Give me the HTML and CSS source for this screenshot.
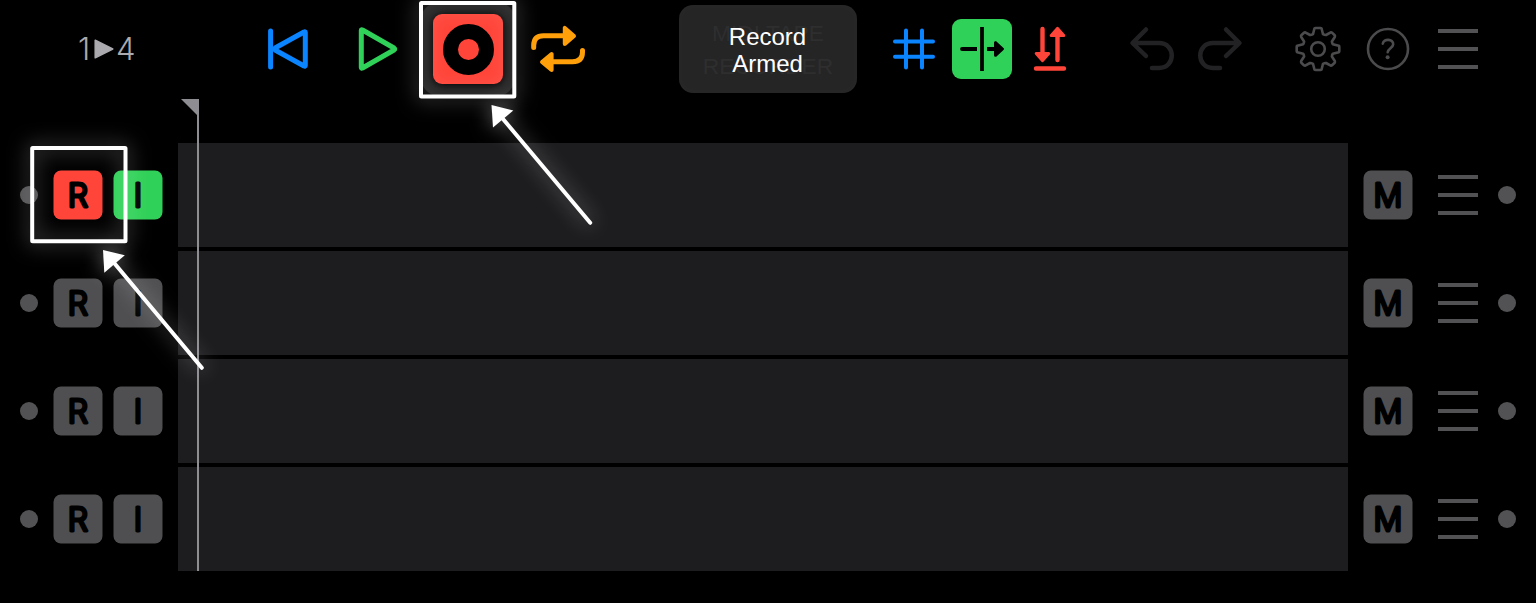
FILE: index.html
```html
<!DOCTYPE html>
<html lang="en">
<head>
<meta charset="utf-8">
<title>MIDI Tape Recorder</title>
<link rel="stylesheet" href="styles.css">
</head>
<body>
<div class="app">
  <header class="toolbar">
    <div class="counter"><span>1</span><svg class="counter-arrow" viewBox="0 0 20 20"><path d="M1.2 1.2 18.8 10 1.2 18.8Z"/></svg><span>4</span></div>
    <svg class="tool rewind" viewBox="266 0 44 98"><path d="M270.600 31V67M305.300 32.500V65.500Q305.300 66.500 304 66L275.500 50.200Q273.800 49 275.500 47.800L304 32Q305.300 31.500 305.300 32.500Z"/></svg>
    <svg class="tool play" viewBox="356 0 44 98"><path d="M361.300 30.500V67.500Q361.300 68.500 362.500 68L394 50Q395.500 49 394 48L362.500 30Q361.300 29.500 361.300 30.500Z"/></svg>
    <div class="record"><div class="record-ring"></div></div>
    <svg class="tool loop" viewBox="530 0 56 98">
      <path d="M533.700 47.500V45.500Q533.700 35.700 543.500 35.700H565M582.500 50.500V52Q582.500 61.800 572.500 61.800H552"/>
      <path class="head" d="M564.800 27.900V44L574 36ZM551.600 54V70L542 62Z"/>
    </svg>
    <div class="display">
      <div class="title"><span>MIDI TAPE</span><span>RECORDER</span></div>
      <div class="message"><span>Record</span><span>Armed</span></div>
    </div>
    <svg class="tool grid" viewBox="892 0 44 98"><path d="M906 30.500V67.500M922 30.500V67.500M895 41.500H933M895 56.800H933"/></svg>
    <div class="insert"><svg class="tool" viewBox="952 0 60 98"><path class="cap" d="M962 49H970"/><path d="M962 49H977M982 27V71M987 49H996"/><path class="head" d="M995.500 42.700V55.300L1002.500 49Z"/></svg></div>
    <svg class="tool quantize" viewBox="1032 0 36 98">
      <path d="M1042.500 29V54M1057.500 60V35M1036 68.500H1064"/>
      <path class="head" d="M1036.300 53.500H1048.700L1042.500 60.500ZM1051.300 35.500H1063.700L1057.500 28.500Z"/>
    </svg>
    <svg class="tool history undo" viewBox="1129 0 46 98"><path d="M1146 29.500 1132.500 43 1146 56M1133 43H1159C1176 43 1176 68 1159 68H1152"/></svg>
    <svg class="tool history redo" viewBox="1197 0 46 98"><path d="M1226 29.500 1239.500 43 1226 56M1239 43H1213C1196 43 1196 68 1213 68H1220"/></svg>
    <svg class="tool settings" viewBox="1294 0 48 98">
      <path d="M1314.500 28.300Q1314.800 28 1315.500 28H1320.500Q1321.200 28 1321.500 28.300L1323 34.200Q1324.800 35.200 1326 35L1330.800 32.300Q1331.500 32.200 1332 32.700L1334.700 35.300Q1335.200 36 1334.800 37L1331.900 41.500Q1332 43 1332.800 44.200L1338.700 45.700Q1339.300 46 1339.300 46.700V51.300Q1339.300 52 1338.700 52.300L1332.800 53.800Q1332 55 1331.900 56.500L1334.800 61Q1335.200 62 1334.700 62.700L1332 65.300Q1331.500 65.800 1330.800 65.700L1326 63Q1324.800 62.800 1323 63.800L1321.500 69.700Q1321.200 70 1320.500 70H1315.500Q1314.800 70 1314.500 69.700L1313 63.800Q1311.200 62.800 1310 63L1305.200 65.700Q1304.500 65.800 1304 65.300L1301.300 62.700Q1300.800 62 1301.200 61L1304.100 56.500Q1304 55 1303.200 53.800L1297.300 52.300Q1296.700 52 1296.700 51.300V46.700Q1296.700 46 1297.300 45.700L1303.200 44.200Q1304 43 1304.100 41.500L1301.200 37Q1300.800 36 1301.300 35.300L1304 32.700Q1304.500 32.200 1305.200 32.300L1310 35Q1311.200 35.200 1313 34.200Z"/>
      <circle cx="1318" cy="49" r="6.800"/>
    </svg>
    <svg class="tool help" viewBox="1366 0 44 98"><circle cx="1388" cy="49" r="20"/><path d="M1382.800 43.700C1383.500 38.200 1393.500 38.700 1393.200 44.400C1393 48 1387.800 48.500 1387.700 52.300"/><circle class="point" cx="1387.600" cy="57.300" r="2"/></svg>
    <div class="menu"><i></i><i></i><i></i></div>
  </header>

  <main class="tracks">
    <section class="track armed">
      <div class="inputs"><i class="dot"></i><svg class="key rec"><rect x=".5" y=".5" width="49" height="49" rx="7.500"/><text x="25" y="36.700">R</text></svg><svg class="key in"><rect x=".5" y=".5" width="49" height="49" rx="7.500"/><text x="25" y="36.700">I</text></svg></div>
      <div class="lane"></div>
      <div class="outputs"><svg class="key"><rect x=".5" y=".5" width="49" height="49" rx="7.500"/><text x="25" y="36.700">M</text></svg><div class="menu"><i></i><i></i><i></i></div><i class="dot"></i></div>
    </section>
    <section class="track">
      <div class="inputs"><i class="dot"></i><svg class="key rec"><rect x=".5" y=".5" width="49" height="49" rx="7.500"/><text x="25" y="36.700">R</text></svg><svg class="key in"><rect x=".5" y=".5" width="49" height="49" rx="7.500"/><text x="25" y="36.700">I</text></svg></div>
      <div class="lane"></div>
      <div class="outputs"><svg class="key"><rect x=".5" y=".5" width="49" height="49" rx="7.500"/><text x="25" y="36.700">M</text></svg><div class="menu"><i></i><i></i><i></i></div><i class="dot"></i></div>
    </section>
    <section class="track">
      <div class="inputs"><i class="dot"></i><svg class="key rec"><rect x=".5" y=".5" width="49" height="49" rx="7.500"/><text x="25" y="36.700">R</text></svg><svg class="key in"><rect x=".5" y=".5" width="49" height="49" rx="7.500"/><text x="25" y="36.700">I</text></svg></div>
      <div class="lane"></div>
      <div class="outputs"><svg class="key"><rect x=".5" y=".5" width="49" height="49" rx="7.500"/><text x="25" y="36.700">M</text></svg><div class="menu"><i></i><i></i><i></i></div><i class="dot"></i></div>
    </section>
    <section class="track">
      <div class="inputs"><i class="dot"></i><svg class="key rec"><rect x=".5" y=".5" width="49" height="49" rx="7.500"/><text x="25" y="36.700">R</text></svg><svg class="key in"><rect x=".5" y=".5" width="49" height="49" rx="7.500"/><text x="25" y="36.700">I</text></svg></div>
      <div class="lane"></div>
      <div class="outputs"><svg class="key"><rect x=".5" y=".5" width="49" height="49" rx="7.500"/><text x="25" y="36.700">M</text></svg><div class="menu"><i></i><i></i><i></i></div><i class="dot"></i></div>
    </section>
  </main>

  <svg class="playhead" viewBox="0 0 18 472"><path d="M0 0H18V472H16V16Z"/></svg>

  <svg class="callouts" viewBox="0 0 1536 603">
    <g class="callout"><rect x="421" y="3" width="93.300" height="93.500" rx=".5"/></g>
    <g class="callout"><rect x="32.200" y="148" width="93.300" height="93.300" rx=".5"/></g>
    <g class="callout"><path d="M500.500 116 590.200 222.800"/><path class="tip" d="M491.500 105 513.300 110.500 493 127.500Z"/></g>
    <g class="callout"><path d="M112.500 261 201.800 367.800"/><path class="tip" d="M103 250 124.800 255.300 104.300 272.700Z"/></g>
  </svg>
</div>
</body>
</html>
```
FILE: styles.css
```css
* { box-sizing: border-box; }
body { margin: 0; background: #000; overflow: hidden; }
.app {
  position: relative;
  width: 1536px;
  height: 603px;
  background: #000;
  font-family: Inter, "Liberation Sans", sans-serif;
}

.toolbar { display: flex; align-items: center; height: 98px; padding-left: 79px; }
.toolbar > * { flex: none; }
.counter {
  display: flex;
  align-items: center;
  width: 60px;
  color: #aaaaaf;
  font: 300 31px/44px Inter, sans-serif;
}
.counter span:first-child { width: 16px; margin-left: -1px; }
.counter span:last-child { margin-left: 2px; }
.counter-arrow { width: 20px; height: 20px; flex: none; fill: #aaaaaf; stroke: #aaaaaf; stroke-width: 1.500px; stroke-linejoin: round; }

.tool { height: 98px; fill: none; stroke-linecap: round; stroke-linejoin: round; display: block; }
.rewind { width: 44px; margin-left: 127px; stroke: #0a84ff; stroke-width: 5px; }
.play { width: 44px; margin-left: 46px; stroke: #30d158; stroke-width: 5px; }
.record {
  display: grid;
  place-items: center;
  width: 70px;
  height: 70px;
  margin-left: 33px;
  border-radius: 9px;
  background: #ff453a;
  box-shadow: 0 1px 7px #000, 0 0 0 13px #1a1a1a;
}
.record-ring { width: 51px; height: 51px; border: 15.500px solid #000; border-radius: 50%; }
.loop { width: 56px; margin-left: 27px; stroke: #ff9f0a; stroke-width: 5px; }
.loop .head { fill: #ff9f0a; stroke-width: 4px; }

.display {
  display: grid;
  width: 178px;
  height: 88px;
  margin-left: 93px;
  border-radius: 14px;
  background: #252525;
  box-shadow: inset 0 0 12px rgba(255, 255, 255, .025);
  font: 24px/27px "Liberation Sans", sans-serif;
  text-align: center;
}
.title, .message { grid-area: 1 / 1; display: flex; flex-direction: column; }
.title { padding-top: 12px; font-size: 22.800px; line-height: 33px; color: #2e2e2f; }
.message { padding-top: 18px; padding-right: 1px; color: #fff; }

.grid { width: 44px; margin-left: 35px; stroke: #0a84ff; stroke-width: 4px; }
.insert {
  display: grid;
  place-items: center;
  width: 60px;
  height: 60px;
  margin-left: 16px;
  border-radius: 9px;
  background: #30d158;
  overflow: hidden;
}
.insert .tool { width: 60px; margin: -19px 0; stroke: #000; stroke-width: 3.800px; stroke-linecap: butt; }
.insert .cap { stroke-linecap: round; }
.insert .head { fill: #000; stroke-width: 3px; }
.quantize { width: 36px; margin-left: 20px; stroke: #ff453a; stroke-width: 4.400px; }
.quantize .head { fill: #ff453a; stroke-width: 3.200px; }
.history { width: 46px; stroke: #222224; stroke-width: 4.500px; }
.undo { margin-left: 61px; }
.redo { margin-left: 22px; }
.settings { width: 48px; margin-left: 51px; stroke: #4b4b4d; stroke-width: 2.600px; }
.help { width: 44px; margin-left: 24px; stroke: #4b4b4d; stroke-width: 2.600px; }
.help .point { fill: #4b4b4d; stroke: none; }
.menu { display: flex; flex-direction: column; gap: 14px; width: 40px; }
.menu i { height: 4px; background: #525254; }
.toolbar .menu { margin-left: 28px; }

.tracks { display: grid; grid-auto-rows: 104px; gap: 4px; padding-top: 45px; }
.track { display: grid; grid-template-columns: 178px 1170px 188px; }
.lane { background: #1d1d1f; }
.inputs, .outputs { display: flex; align-items: center; }
.inputs { padding-left: 20px; }
.outputs { padding-left: 15px; }
.dot { width: 18px; height: 18px; border-radius: 50%; background: #525254; }
.key { width: 50px; height: 50px; flex: none; }
.key rect { fill: #4f4f51; }
.key text {
  fill: #000;
  stroke: #000;
  stroke-width: 3px;
  stroke-linejoin: round;
  font-weight: 300;
  font-size: 32px;
  text-anchor: middle;
}
.rec { margin-left: 15px; }
.in { margin-left: 10px; }
.armed .rec rect { fill: #ff453a; }
.armed .in rect { fill: #30d158; }
.outputs .menu { margin-left: 25px; }
.outputs .dot { margin-left: 20px; }

.playhead { position: absolute; left: 181px; top: 99px; width: 18px; height: 472px; fill: #8e8e92; }
.callouts { position: absolute; inset: 0; width: 1536px; height: 603px; }
.callout { fill: none; stroke: #fff; stroke-width: 4px; stroke-linecap: round; stroke-linejoin: round; filter: drop-shadow(0 0 10px rgba(255, 255, 255, .5)); }
.callout .tip { fill: #fff; stroke: none; }
```
